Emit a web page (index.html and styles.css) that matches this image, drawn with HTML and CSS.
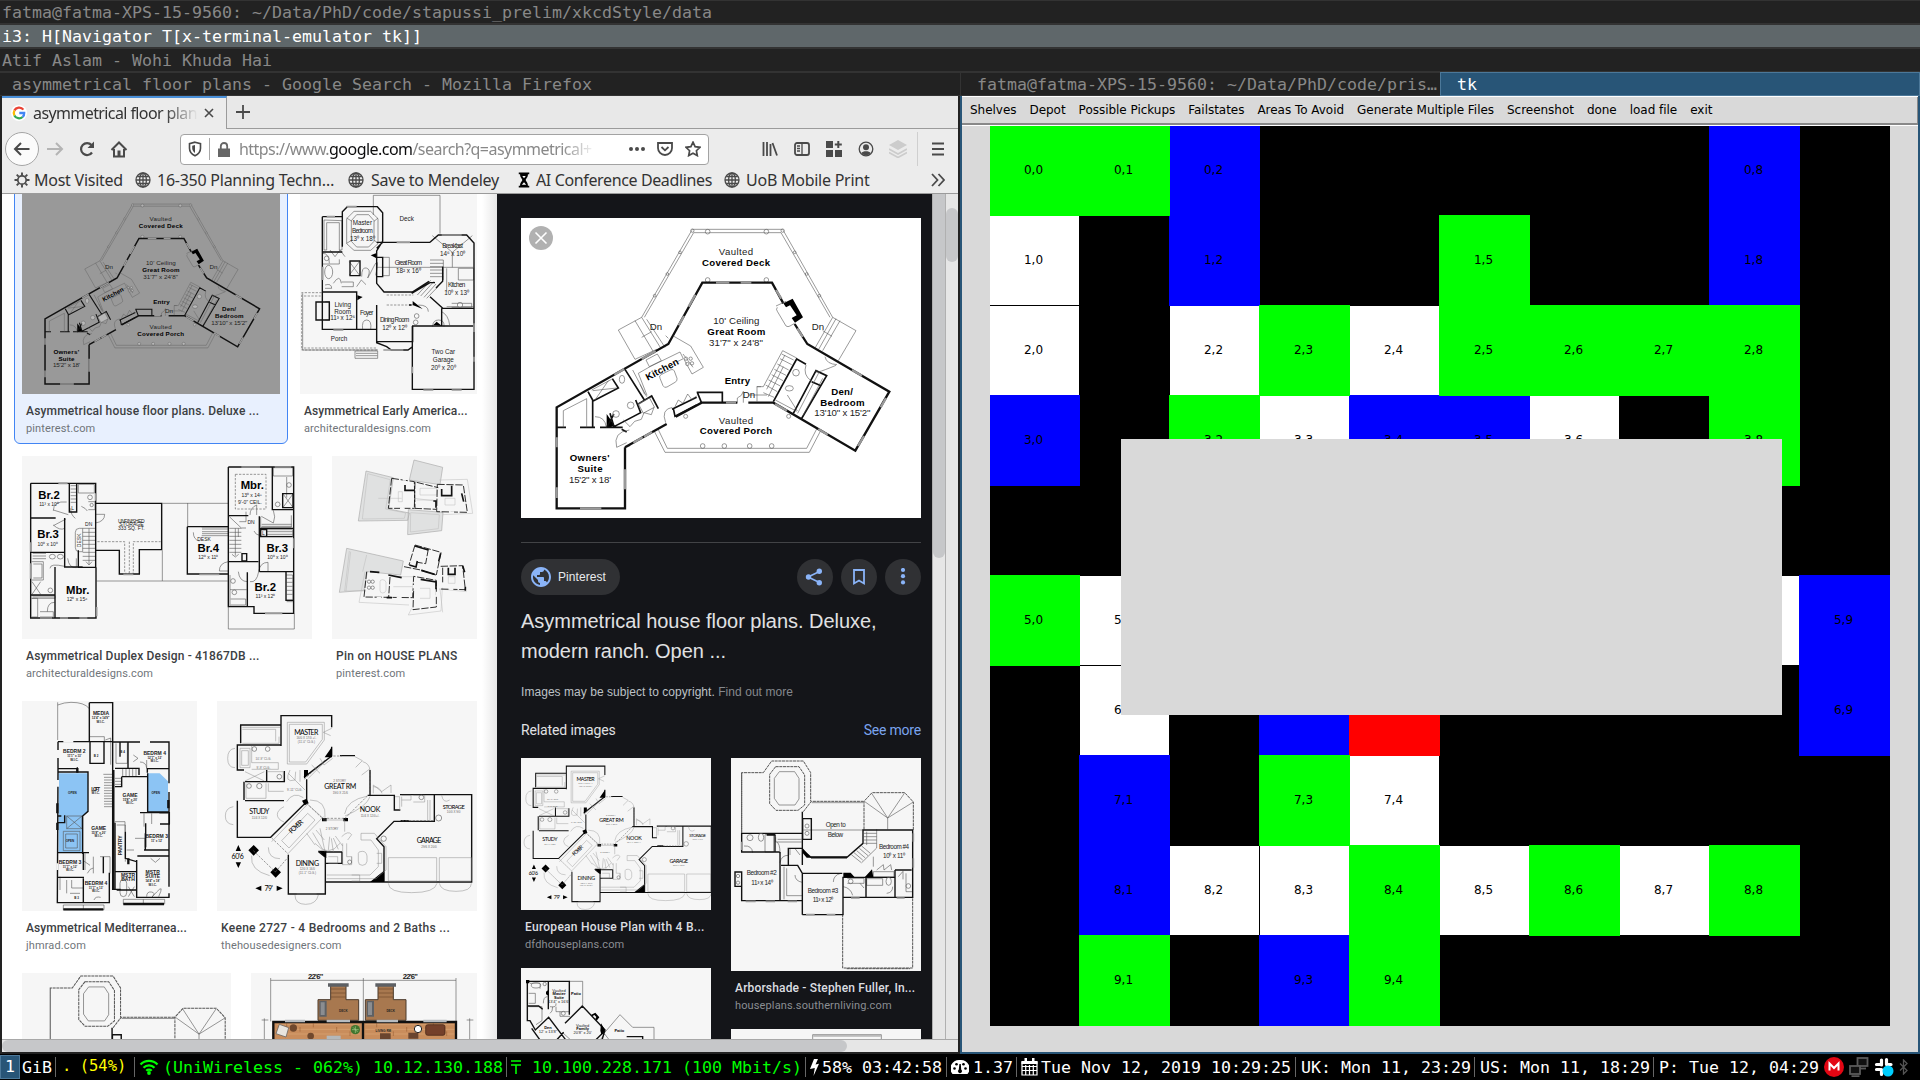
FILE: index.html
```html
<!DOCTYPE html>
<html lang="en">
<head>
<meta charset="utf-8">
<title>Desktop</title>
<link rel="stylesheet" href="styles.css">
</head>
<body>
<svg class="defs" width="0" height="0">
  <defs>
    <g id="globe"><circle cx="8" cy="8" r="7"/><ellipse cx="8" cy="8" rx="3.4" ry="7"/><path d="M1 8h14M2.3 4.5h11.4M2.3 11.5h11.4M8 1v14"/></g>

    <g id="deluxe">
      <path class="t" d="M425 352L577 88H848L998 352M433 352L581 98H843L990 352M425 352l-70 38 50 88 65-30M405 362l58 98M425 352l57 92M440 358l55 84M998 352l70 40-53 90M998 352l-53 92M1020 362l-52 90M1008 356l-52 92M455 395l-30 17M968 392l28 17"/>
      <path class="t" d="M462 692l33 65H928l34-65M474 687l28 58H920l30-58"/>
      <g class="c"><circle cx="577" cy="92" r="5"/><circle cx="848" cy="92" r="5"/><circle cx="623" cy="95" r="7"/><circle cx="799" cy="95" r="7"/><circle cx="502" cy="222" r="4"/><circle cx="540" cy="157" r="4"/><circle cx="464" cy="287" r="4"/><circle cx="920" cy="222" r="4"/><circle cx="884" cy="157" r="4"/><circle cx="958" cy="287" r="4"/><circle cx="623" cy="240" r="7"/><circle cx="799" cy="240" r="7"/><circle cx="608" cy="738" r="7"/><circle cx="673" cy="738" r="7"/><circle cx="749" cy="738" r="7"/><circle cx="815" cy="738" r="7"/><circle cx="557" cy="649" r="6"/><circle cx="866" cy="649" r="6"/></g>
      <path class="w" d="M375 742v183H170V622L505 432 607 248H816L850 310M884 372l38 60L1168 575 1066 752 820 608H745M712 608H605L527 650M500 672L375 742M375 742l15-8"/>
      <path class="win" d="M170 712v30M170 862v32M240 925h64M375 808v60M648 248h40M722 248h32M536 376l16-28M566 320l20-36M828 270l16 26M892 385l16 26M343 524l30-17M425 477l42-24M1056 510l30 17M1142 622l16-28M1074 738l18-30M955 687l28 17M825 612l36 20M400 728l28-16M432 710l24-14M678 608h30"/>
      <path class="k" d="M850 310l28-14 31 56-24 16-10-14 15-8-20-30-12 6zM320 642l25 36-25 6z"/>
      <path class="m" d="M278 682V600l-14-25M170 682h28M240 682h45M300 682h68M375 508l60 95M278 604l77-40-18-28M330 640l12 40 80-42-15-38M415 612l40-24 20 38M520 625l5 24 65-34M516 628l74-36M590 577h77v30M592 577l12 30M820 605l70-128 28 16M880 640l68-128 32 15-76 130M935 545l28 12M320 682l22-40M365 688l15 8"/>
      <path class="t" d="M190 682v-50l70-36v86M275 570l60-32M285 600l40-58M278 572l72-8M520 408l52 30 38 64-34 20-24-44M505 415l-8-8M438 480l34-18 12 20-36 18zM415 520l35-20 90-44 10 20-20 10M415 520l26 66M398 510l42 80M549 462l30 40M480 535q-5-8 5-12l28-14q8-2 10 4l8 22q2 8-6 12l-24 14q-8 4-12-4zM828 318l30-14M832 322q-5 6 0 12l26 44q6 4 12 0l14-8M285 650q30 0 34 32M350 742q-12-46 38-52M350 742l30-14M497 668q-15-40 20-46M525 620l10-20 14 10 14-28 12 16 15-10M370 660l20 20 14-16 20-6 8-20 22 6 8-22M975 470q4 22 36 24M952 510q-20 18 56-14M918 495q-10 30 16 48M712 608v-14q15-6 18-20v34M420 553l14 30"/>
      <path class="t" d="M790 560l58-108 42 22M800 568l55-103M783 560h-12v45M770 560h20M790 578l32 14M797 555l35 20M806 540l35 18M815 524l34 18M823 508l35 18M832 492l34 18M840 476l35 18M845 462l36 18M805 590l45-90M745 585h56M826 600l64 34M862 585l30 48M893 640l65-125M910 645l58-110"/>
      <g class="c"><circle cx="348" cy="642" r="10"/><circle cx="392" cy="616" r="10"/><circle cx="888" cy="518" r="10"/><ellipse cx="366" cy="538" rx="8" ry="12"/><ellipse cx="868" cy="565" rx="12" ry="8"/><circle cx="558" cy="476" r="5"/><circle cx="572" cy="476" r="5"/><circle cx="562" cy="492" r="5"/><circle cx="576" cy="490" r="5"/><rect x="420" y="600" width="38" height="32" transform="rotate(-28 440 616)"/></g>
      <g class="lbl"><text x="708" y="166" textLength="103">Vaulted</text><text class="b" x="708" y="198" textLength="204">Covered Deck</text><text x="709" y="373" textLength="138">10' Ceiling</text><text class="b" x="709" y="405" textLength="174">Great Room</text><text x="708" y="437" textLength="162">31'7" x 24'8"</text><text x="468" y="391">Dn</text><text x="954" y="391">Dn</text><text x="747" y="594">Dn</text><text class="b" x="712" y="552" textLength="76">Entry</text><text class="b" x="486" y="518" textLength="108" transform="rotate(-28 486 508)">Kitchen</text><text x="708" y="671" textLength="103">Vaulted</text><text class="b" x="708" y="703" textLength="217">Covered Porch</text><text class="b" x="1026" y="585" textLength="65">Den/</text><text class="b" x="1027" y="617" textLength="133">Bedroom</text><text x="1027" y="649" textLength="168">13'10" x 15'2"</text><text class="b" x="269" y="784" textLength="120">Owners'</text><text class="b" x="270" y="816" textLength="75">Suite</text><text x="270" y="848" textLength="126">15'2" x 18'</text></g>
    </g>

    <g id="keene">
      <path class="w5" d="M843 168V77H995V112M995 170v28L912 262M722 160v-55H843M722 165h-10v75h20M735 275h118v-32M800 240v35M712 332V442H812L920 335V268M735 332h117M712 165h130M732 275v55M1020 197h45M1110 240v75M1103 316H1183V360M1200 314H1415V576H976M1303 314v80H1182L1130 446 1152 470V576M865 494V612H976V486M976 486h50M1183 314v46h18M1202 392h24M955 484l22 18M976 485v35h50v-35"/>
      <path class="k" d="M996 170v32h-22zM1152 542v34h-42zM912 240h12v12l-12 14zM745 481l16-16 16 16-16 16zM811 547l16-16 16 16-16 16zM955 482h24v22zM707 483h16l-8-18zM707 517h16l-8 17zM784 587v16l-18-8zM830 587v16l18-8zM906 332l14-6 6 14-12 6zM966 384h14v10h-14zM1030 384h14v10h-14z"/>
      <path class="t5" d="M862 97H973V150L920 222H862zM868 103H967V148L917 216H868zM727 112h113M727 118h100v36M727 160h110v-20M720 175h30v58h-30zM725 182h20v44h-20zM755 168v50h80v20h-80M995 115l-25 12 22 10M975 215l-50 50M935 225l25 25M960 205l12 20 26-20M870 240q-20 40 15 30l2-25M900 240v35M705 175q-22 2-22 30t22 28M700 350q-24 4-24 28t24 26M735 245l58 28M735 273l58-28M800 245h50v28M738 280v45h60v-45M805 280v24h46M852 350q-20 10-20 24t20 22M860 335q20-32 50-12M1065 200l22 12-20 20M1088 215q20 5 22 26M1085 255l24-18M1120 310v-25l25 20 28-20v24M1120 290q20 0 26 20M1185 320h14v40M1205 320v30M1205 316h28v14h-28M1240 316h34v20h-34M1283 330v60M1290 330v60M1325 316q5 26 24 14M1103 318Q1040 330 1034 372M1110 320Q1100 350 1035 378M930 330q50 0 45 52M815 455l110-115M925 345l45 40M865 490l105-110M845 452l78-82 22 20-78 84zM1165 503h145v70h-145zM1318 503h96v70h-96zM1165 580q0 28 70 28t76-28M1318 580q4 24 50 24t46-24M885 615q0 28 32 28t38-28M755 497q-6 44 54 60M805 472q0 34 35 34M920 430l25 35M945 460q40 45 75 0M938 428l30 50M948 420l25 30M960 415l15 70M985 480l4-40M1000 485l-6-40M1015 478l-15-34M1028 468l-22-30M1025 440q20-20 30-6l-12 16M1028 460v65M1040 460v40h15v24h-28M980 555h130l25-25v-50l-22-30h-30v-20h40l35 40v70l-30 26H980M1055 500v20M1075 490q0-6 12-6t14 14v16q-2 12-14 12t-12-12zM1130 490h15v30h-15M1055 555h24v18h-24M985 500h28v20h-28M970 390h64v35M890 612h60M915 300l-50-50"/>
      <path class="d5" d="M975 210l-62 58M1000 198h25M1110 240v75M1102 318L1035 385M970 385h68M920 340l50 48M815 444l50 48M760 482l66 64M826 546l38-44M1205 392h95"/>
      <g class="c5"><circle cx="763" cy="177" r="7"/><circle cx="803" cy="177" r="7"/><circle cx="838" cy="260" r="7"/><circle cx="747" cy="288" r="7"/><circle cx="778" cy="288" r="8"/><circle cx="1316" cy="384" r="9"/><circle cx="1264" cy="322" r="7"/><circle cx="1151" cy="446" r="8"/><circle cx="1049" cy="516" r="6"/></g>
      <g class="kl"><text x="919" y="134" textLength="72">MASTER</text><text x="1021" y="297" textLength="96">GREAT RM</text><text x="778" y="372" textLength="60">STUDY</text><text x="1110" y="367" textLength="62">NOOK</text><text x="1361" y="356" font-size="17" textLength="66">STORAGE</text><text x="1287" y="458" textLength="74">GARAGE</text><text x="922" y="527" textLength="70">DINING</text><text x="888" y="417" textLength="50" transform="rotate(-43 888 410)">FOYER</text><text x="713" y="507" textLength="37">60'6</text><text x="806" y="602" textLength="25">79'</text></g>
      <g class="ks"><text x="919" y="147">16/0 X 17/0 +/-</text><text x="919" y="158">(11'-0" CLG.)</text><text x="1019" y="275">2 STORY</text><text x="1021" y="311">19/0 X 21/6</text><text x="778" y="387">11/4 X 12/0</text><text x="1110" y="382">11/4 X 12/0+/-</text><text x="1361" y="370">10/0 X 9/0</text><text x="1287" y="473">29/6 X 20/0</text><text x="922" y="541">12/0 X 16/0</text><text x="922" y="552">(11'-1" CLG.)</text><text x="790" y="209">10'-9" CLG.</text><text x="790" y="237">9'-9" CLG.</text><text x="884" y="303">9'-11" CLG.</text><text x="996" y="419">2 STORY</text></g>
    </g>

    <g id="arbor">
      <path class="dw" d="M725 278V98h65l25-35h95l22 35v86M910 215l24-31h158M1092 268V184l24-26h98l26 28v84M1028 522V684h210V472M1040 686h190M725 98v180M827 80h70l17 25v90l-20 16h-66l-19-20v-88z"/>
      <path class="t" d="M838 95h46l13 20v62l-12 18h-48l-14-20v-60zM1163 234V268M1163 234l-70-50M1163 234l-48-74M1163 234l50-74M1163 234l77-48M935 188h155M910 270h180M852 380v98M860 385v82h48M827 292v14h78M833 298h72M795 284h26v52h-26zM840 340q0-30-10-34M732 318q24-2 26 20M840 368q4-22 24-22M870 345v-20M900 345l-14-18M885 405q0 18 22 22M1000 426q0-20 22-26M1120 350v30M1130 390l20-16 2 16 20-16 3 16M1030 440q22 4 28 26M1080 430l12 14M1160 460q18-2 18-20M1195 410l14-16v24M1100 416h48v20h-48zM1218 400v55h18M1120 395h62v16h-62zM1042 415h50v15h-50"/>
      <path class="t" d="M1100 275v40M1092 290h38M1092 300h38M1092 310h38M1092 280h38M1085 318l26 22M1078 325l26 22M1070 332l26 22M1062 338l26 22M1054 344l30 24M1085 368l45-44v-56"/>
      <path class="w5" d="M725 284V280H907M907 215v115l26 22h108l48-42V270H1238V472H1030M725 280v56h54M725 396v86H907V400M727 336h112M840 336v144M825 284v52M907 524h122V410M907 482v42M843 376h50l14 24h120M907 350v-25M865 375v-50h42v50M1030 412h155v60M1098 412v60M1185 390v22M1185 390h50M705 396h20v43h-20zM908 236h26v62h-26z"/>
      <path class="w8" d="M933 352h108M800 284h26"/>
      <path class="k" d="M1030 398h22l12 14h-34zM1094 412l22-24 4 24zM908 325l26 28h-14l-12-14z"/>
      <path class="win5" d="M737 484h30M797 484h28M863 484h28M918 524h26M980 524h26M1053 474h26M1190 474h24M725 305v25M1240 280v25M1240 355v28"/>
      <g class="c5"><circle cx="750" cy="293" r="9"/><ellipse cx="783" cy="292" rx="8" ry="12"/><circle cx="1052" cy="424" r="7"/><ellipse cx="1166" cy="424" rx="8" ry="12"/><circle cx="1225" cy="438" r="7"/><circle cx="921" cy="258" r="6"/><circle cx="921" cy="280" r="6"/><circle cx="714" cy="408" r="5"/><circle cx="714" cy="428" r="5"/></g>
      <g class="al"><text x="1007" y="262" textLength="60">Open to</text><text x="1006" y="290" textLength="46">Below</text><text x="785" y="406" textLength="90">Bedroom #2</text><text x="786" y="434" textLength="64">11³ x 14⁰</text><text x="969" y="458" textLength="92">Bedroom #3</text><text x="969" y="486" textLength="62">11³ x 12⁰</text><text x="1182" y="326" textLength="90">Bedroom #4</text><text x="1182" y="354" textLength="66">10⁰ x 11⁰</text></g>
    </g>
  </defs>
</svg>

<header class="titles">
  <div class="title">fatma@fatma-XPS-15-9560: ~/Data/PhD/code/stapussi_prelim/xkcdStyle/data</div>
  <div class="title title-focus">i3: H[Navigator T[x-terminal-emulator tk]]</div>
  <div class="title">Atif Aslam - Wohi Khuda Hai</div>
</header>

<main class="desk">
  <section class="pane">
    <div class="title title-indent">asymmetrical floor plans - Google Search - Mozilla Firefox</div>
    <div class="firefox">
      <div class="tabs">
        <div class="tab">
          <svg class="favicon" width="16" height="16" viewBox="0 0 16 16"><circle cx="8" cy="8" r="8" fill="#fff"/><path d="M12.4 4.6A5.3 5.3 0 0 0 3.4 5.6" stroke="#ea4335"/><path d="M3.4 5.6A5.3 5.3 0 0 0 3.4 10.4" stroke="#fbbc05"/><path d="M3.4 10.4A5.3 5.3 0 0 0 11.6 12" stroke="#34a853"/><path d="M11.6 12A5.3 5.3 0 0 0 13.2 8H8.3" stroke="#4285f4"/></svg>
          <span class="tab-text">asymmetrical floor plan</span>
          <svg class="ic" width="12" height="12" viewBox="0 0 12 12"><path d="M2 2l8 8M10 2l-8 8" stroke-width="1.6"/></svg>
        </div>
        <svg class="ic plus" width="16" height="16" viewBox="0 0 16 16"><path d="M8 1v14M1 8h14" stroke-width="1.8"/></svg>
      </div>
      <div class="nav">
        <div class="back"><svg class="ic" width="18" height="16" viewBox="0 0 18 16"><path d="M16.500 8H2M8 2L2 8l6 6" stroke-width="2"/></svg></div>
        <svg class="ic off" width="18" height="16" viewBox="0 0 18 16"><path d="M1 8h15M10 2l6 6-6 6" stroke-width="2"/></svg>
        <svg class="ic" width="18" height="16" viewBox="0 0 18 16"><path d="M14 11.500A6 6 0 1 1 13.500 4" stroke-width="2.200"/><path class="f" d="M16 0.500v6.500H9.500z"/></svg>
        <svg class="ic" width="18" height="17" viewBox="0 0 18 17"><path d="M1.500 9L9 1.500 16.500 9M4 8v7.500h10V8" stroke-width="2"/><path class="f" d="M7.500 9.500h3v6h-3z"/></svg>
        <div class="urlbar">
          <svg class="ic" width="14" height="16" viewBox="0 0 14 16"><path d="M7 1.200l5.500 1.500v4.500c0 3.500-2.300 6-5.500 7.600C3.800 13.200 1.500 10.700 1.500 7.200V2.700z" stroke-width="1.600"/><path class="f" d="M7 4v8c-1.800-1.200-2.800-2.800-2.800-5V4.700z"/></svg>
          <i class="urlsep"></i>
          <svg class="ic" width="12" height="15" viewBox="0 0 12 15"><path class="g6" d="M0 6.500h12V15H0z"/><path d="M2.800 7V4.200a3.200 3.200 0 0 1 6.400 0V7" stroke="#666" stroke-width="1.800"/></svg>
          <span class="url">https://www.<b>google.com</b>/search?q=asymmetrical+</span>
          <svg class="ic dots" width="16" height="16" viewBox="0 0 16 16"><g class="f"><circle cx="2" cy="8" r="2"/><circle cx="8" cy="8" r="2"/><circle cx="14" cy="8" r="2"/></g></svg>
          <svg class="ic" width="16" height="16" viewBox="0 0 16 16"><path d="M1 2h14v5a7 7 0 0 1-14 0zM4.500 6L8 9.300 11.500 6" stroke-width="1.800"/></svg>
          <svg class="ic" width="16" height="16" viewBox="0 0 16 16"><path d="M8 1.200l2.100 4.500 4.900.6-3.600 3.400.9 4.900L8 12.200l-4.300 2.400.9-4.900L1 6.300l4.900-.6z" stroke-width="1.700"/></svg>
        </div>
        <div class="tools">
          <svg class="ic" width="16" height="16" viewBox="0 0 16 16"><path d="M1.500 1v14M5 1v14M8.500 3v12M10.500 2l4.500 12.500" stroke-width="1.800"/></svg>
          <svg class="ic" width="16" height="16" viewBox="0 0 16 16"><rect x="1" y="2" width="14" height="12" rx="2" stroke-width="1.800"/><path d="M8 2v12M3 5h3M3 7.500h3M3 10h3" stroke-width="1.300"/></svg>
          <svg class="ic" width="16" height="16" viewBox="0 0 16 16"><path class="f" d="M0 0h7v7H0zM0 9h7v7H0zM9 9h7v7H9z"/><path d="M12.300 0v7M8.800 3.500h7" stroke-width="2"/></svg>
          <svg class="ic" width="16" height="16" viewBox="0 0 16 16"><circle cx="8" cy="8" r="6.800" stroke-width="1.300"/><circle class="f" cx="8" cy="6.300" r="3"/><path class="f" d="M3.500 12c1-2.500 8-2.500 9 0-2 3-7 3-9 0z"/></svg>
          <svg class="ic layers" width="18" height="18" viewBox="0 0 18 18"><path class="l" d="M9 0l9 5-9 5-9-5z"/><path d="M0 9l9 5 9-5M0 12.500l9 5 9-5" stroke="#ccc" stroke-width="1.600"/></svg>
          <i class="navsep"></i>
          <svg class="ic" width="12" height="14" viewBox="0 0 12 14"><path d="M0 1.500h12M0 7h12M0 12.500h12" stroke-width="2"/></svg>
        </div>
      </div>
      <div class="marks">
        <span style="width:121px"><svg class="ic" width="16" height="16" viewBox="0 0 16 16"><circle cx="8" cy="8" r="4.200" stroke-width="1.700"/><path d="M8 0.500v3M8 12.500v3M.5 8h3M12.500 8h3M2.700 2.700l2 2M11.300 11.300l2 2M13.300 2.700l-2 2M4.700 11.300l-2 2" stroke-width="1.900"/></svg>Most Visited</span>
        <span style="width:213px"><svg class="ic gl" width="16" height="16" viewBox="0 0 16 16"><use href="#globe"/></svg>16-350 Planning Techn…</span>
        <span style="width:169px"><svg class="ic gl wide" width="16" height="16" viewBox="0 0 16 16"><use href="#globe"/></svg>Save to Mendeley</span>
        <span style="width:207px"><svg class="glass" width="14" height="16" viewBox="0 0 16 17"><path d="M2 0h12v2h-1.500c0 4-2.500 4.800-2.500 6.500s2.500 2.500 2.500 6.500H14v2H2v-2h1.500c0-4 2.500-4.800 2.500-6.500S3.500 6 3.500 2H2z"/><path d="M6 4h4L8 6.500zM5.500 14L8 11l2.500 3z" fill="#fff"/></svg>AI Conference Deadlines</span>
        <span><svg class="ic gl" width="16" height="16" viewBox="0 0 16 16"><use href="#globe"/></svg>UoB Mobile Print</span>
        <svg class="ic more" width="14" height="14" viewBox="0 0 14 14"><path d="M1 1l5.500 6L1 13M7.500 1L13 7l-5.500 6" stroke-width="1.800"/></svg>
      </div>

      <div class="view">
        <div class="results">
          <div class="row">
            <figure class="card selected">
              <svg class="shot" width="258" height="201" viewBox="63 36.500 1200 935"><use href="#deluxe"/></svg>
              <figcaption><b>Asymmetrical house floor plans. Deluxe ...</b><span>pinterest.com</span></figcaption>
            </figure>
            <figure class="card">
              <svg class="shot" width="177" height="201" viewBox="900 9 531 603">
                <path class="t" d="M1120 75V16h200v115M972 90v90h8V98h38v82h8V92zM1062 64h50l22 22v75l-22 20h-50l-22-20V86zM1070 74h36l16 18v62l-16 17h-36l-16-17V92zM1040 84l16 10M1134 84l-12 10M1134 160l-12-10M1040 160l16-10M1130 232h290M1297 137l60 50 60-50M1357 187v45M1290 210h40v60M1290 220h40M1290 230h40M1290 240h40M1290 250h40M1290 260h40M1252 315l40-44M1262 318l40-44M1272 322l36-40M1280 325l34-35M1375 235h46v35h-46zM1340 235v70M1340 350h80M968 190q20 0 20 30M990 180l15 20 15-20 15 20M1085 260q0-30 14-26t6 24 14-24 8 22M968 222h50v-14M1070 290l14-20 14 14M975 285q20-6 20 10h-20M1000 280q20-30 24 0M1025 290h35v-14h-35M1088 420q-4-30 12-30t12 30M1255 345q30 0 30 20M1298 410q0-20 18-20t16 20M1325 365q20 10 24 40M1048 215l30 40M1078 215l-30 40M1148 202h20v55h-20M976 335h12v55h-12M1355 340h60v12h-60M1065 483h68v22h-68zM1068 490h64M1068 497h64M908 310v170h226"/>
                <path class="d5" d="M965 308h-60v172h228M912 318h50M912 474h218M1160 315h80M1160 345h80"/>
                <path class="w5" d="M967 80h60V65l15-15h90l16 18v85l-18 30v97l22 26h85l50-32M1130 157H1290M1148 157l-18 18M1027 80v90M967 80v338h102M1027 186h-58M1050 213h30v44h-30zM968 306h102v112h60M1130 345v110h108V408H1422V598H1237V408M1235 345h-8M1130 418v40l30 12 14 10h50l14-10M1290 157l25-22h85l22 24v250M1325 355h98M1325 355v55M1235 310l55-32h15M1328 230v44l-20 20M1290 320l40 36M1130 202h18v58h-18M948 336h40v54h-40z"/>
                <path class="k" d="M1072 316l16 5-16 10zM1112 196l16-6v14zM1238 333l30 24-30-12zM1300 405l10-10 15 12z"/>
                <path class="win5" d="M1040 50h30M1190 157h40M1325 135h60M980 80h25M968 230v40M1422 400v26M1270 600h30M1355 600h30M1237 530v20M1000 420h30M1150 480h60M1422 500v15"/>
                <g class="c5"><ellipse cx="986" cy="246" rx="12" ry="20"/><circle cx="980" cy="205" r="7"/><circle cx="1250" cy="378" r="7"/><circle cx="1247" cy="397" r="7"/><circle cx="1380" cy="345" r="8"/></g>
                <g class="al"><text x="1220" y="94">Deck</text><text x="1087" y="104">Master</text><text x="1087" y="128" textLength="62">Bedroom</text><text x="1087" y="153">13⁰ x 18⁰</text><text x="1225" y="225" textLength="82">Great Room</text><text x="1225" y="250">18² x 16⁰</text><text x="1358" y="174" textLength="62">Breakfast</text><text x="1358" y="198">14⁶ x 10⁰</text><text x="1370" y="291" textLength="52">Kitchen</text><text x="1370" y="316">10⁰ x 13⁰</text><text x="1028" y="352">Living</text><text x="1028" y="371">Room</text><text x="1028" y="389">11³ x 12⁶</text><text x="1100" y="376" textLength="40">Foyer</text><text x="1184" y="396" textLength="88">Dining Room</text><text x="1184" y="420">12⁰ x 12⁰</text><text x="1017" y="452">Porch</text><text x="1330" y="491">Two Car</text><text x="1330" y="516">Garage</text><text x="1330" y="541">20⁰ x 20⁰</text></g>
              </svg>
              <figcaption><b class="tight">Asymmetrical Early America...</b><span>architecturaldesigns.com</span></figcaption>
            </figure>
          </div>
          <div class="row">
            <figure class="card">
              <svg class="shot" width="290" height="183" viewBox="66 33 870 549">
                <path class="t" d="M487 175H685M487 316v92M290 408H683M563 244v-70M685 486v66h198V506M95 350h35v55H95M100 357h26v42h-26M235 118h48v26h-48zM265 170h20v24h-20M160 195l45 14M160 197q0-30 40-26M160 242l38-20M160 240q20 18 34 10M203 340q4 30 26 28v-28M286 208h28q0 22-28 26M212 190q0 20 14 30M150 370q0-16 44-6M238 250h10v70h-10q-12 0-12-12v-46q0-12 12-12M95 452h70v8H95M95 460h18v56H95M142 500q0-28 22-28M120 500h40v16h-40M244 184q14 6 18 14M605 246h80v26h-80M580 262q0 22 18 26M820 68h58v25h-58zM860 96v62M820 196q8 20 0 38l-36-20M750 210q0-22 20-30v30M658 378q0-24 27-28M685 378h-27M776 380q4-28 28-28v28M743 410q-25 0-28-30M750 410q20 4 26-30M690 390v44h50M690 434v50h50M692 462h45v18h-45M782 215v32h92v-36M800 254h78v20h-78M858 390h20v75h-20M860 470h20v36M762 258q4 12 20 14M715 250v26M738 200v30h-20"/>
                <path class="t" d="M248 250h38M248 262h38M248 274h38M248 286h38M248 298h38M248 310h38M248 322h38M248 334h38M248 346h38M267 250v108M258 350l9 10 9-10M688 250h36M688 262h36M688 274h36M688 286h36M688 298h36M688 310h36M688 322h36M706 250v82M696 328l10 8 10-8M688 215l36 34h14M98 325h40M98 333h40M98 341h40M98 456h64M212 122h18M212 132h18M212 142h18M212 152h18M212 162h18M212 172h18M606 252h78M606 260h78M606 266h78M785 238h90M785 244h90M800 260h78M800 268h78M860 400h18M860 412h18M860 424h18M860 436h18M860 448h18M850 148l28 38M878 148l-28 38M96 410l26 38M122 410l-26 38"/>
                <path class="d5" d="M292 290h82v95h26v-95h82M706 88h92v104h-92zM388 290v96"/>
                <path class="w5" d="M92 115H287V367h-52V316M92 115V519H288V367M92 219h75M194 219v147h54M92 322h102M165 366v153M208 115v86h22v-86M92 450h72M287 175H485V314H418v73H358V316H287M562 245h123M562 245V387H685M685 66H881V505H762V485H685V66M817 66v128h62M685 212h60M778 214v166M778 380h103M742 382v105M685 350h90M778 250h103M778 275h100M848 146h31v42h-31zM726 326h14v22h-14zM782 254h18v20h-18zM858 382v84h22M208 180v20"/>
                <path class="win5" d="M175 115h28M92 292v28M92 355v46M287 145v22M120 519h36M180 519h24M238 519h24M290 486v28M370 388h30M598 388h60M724 66h56M824 66h50M882 280v30M795 505h52"/>
                <g class="c5"><ellipse cx="157" cy="335" rx="9" ry="7"/><ellipse cx="181" cy="335" rx="9" ry="7"/><circle cx="270" cy="157" r="7"/><circle cx="275" cy="180" r="5"/><circle cx="867" cy="120" r="7"/><circle cx="833" cy="178" r="7"/><circle cx="699" cy="408" r="7"/><circle cx="703" cy="442" r="7"/><circle cx="151" cy="436" r="7"/></g>
                <g class="dl"><text x="147" y="162">Br.2</text><text x="144" y="278">Br.3</text><text x="233" y="447">Mbr.</text><text x="757" y="131">Mbr.</text><text x="625" y="322">Br.4</text><text x="832" y="322">Br.3</text><text x="796" y="437">Br.2</text></g>
                <g class="ds"><text x="147" y="184">11³ x 10⁰</text><text x="143" y="302">10⁰ x 10⁰</text><text x="231" y="469">12⁰ x 15⁶</text><text x="755" y="155">13⁰ x 14⁸</text><text x="750" y="178">9'-0" CEIL.</text><text x="625" y="343">12⁰ x 11⁰</text><text x="832" y="343">10⁰ x 10⁰</text><text x="796" y="458">11³ x 12⁰</text><text x="394" y="233" textLength="80">UNFINISHED</text><text x="394" y="244">STORAGE</text><text x="394" y="255">333 SQ. FT.</text><text x="266" y="244">DN</text><text x="753" y="236">DN</text><text x="612" y="288">DESK</text><text x="790" y="269">L</text><text x="218" y="194">L</text><text x="238" y="290" transform="rotate(-90 238 286)">DESK</text></g>
              </svg>
              <figcaption><b>Asymmetrical Duplex Design - 41867DB ...</b><span>architecturaldesigns.com</span></figcaption>
            </figure>
            <figure class="card">
              <svg class="shot pin" width="145" height="183" viewBox="996 33 435 549">
                <path class="pf" d="M1098 78l82 20-14 94 62 12-5 22-148 2zM1242 45l86 22-8 52-92-14zM1225 194l104 8-4 55-102 12zM1040 310l170 38-8 42-100-10-10 56-74 6z"/>
                <path class="pt" d="M1103 86l68 18-14 88 60 12-4 16-126 2zM1232 203l86 6-3 42-84 10zM1318 105l84-2 16 102-90 4M1052 320l-14 118M1100 330l-12 50M1048 318l-14 120h64M1095 380l-18 92 150 8M1235 490l-10 20 98-12 4-70M1400 440l-80-8 8 70M1135 160h70M1260 130h50v20h-50zM1335 160h30v20h-30zM1180 395h60v30h-60M1260 430h30v30h-30M1345 395h20v20h-20zM1140 410q0-6 8-6t10 8v24q-2 8-10 8t-8-8zM1195 140h12v30h-12zM1250 165h50M1245 160l60 8"/>
                <path class="w5" d="M1175 100l68 10 2 80M1175 100l-10 90h78M1250 112l65 16M1245 110l-2 80 66 3M1312 118l78 2 12 82-92-2zM1245 300l78 22-14 68M1245 300l-18 60M1212 365l60 12M1264 376l44 14M1322 364l66-2 8 72-78-2M1100 380l-8 76 146 2 3-64 68 12v80l-70 8 2-60M1170 396l-4 60M1285 312l-8 44-24-4M1328 368v44"/>
                <path class="pw" d="M1110 380l28 2M1165 390l40 8M1262 403l46 8v22M1228 360l20 6 4-18M1388 362l6 20M1396 425v12M1300 168h8v20M1215 120v16h28M1385 145l6 25M1245 303l40 12M1322 325l-6 24M1264 376l40 12M1160 458h16M1325 132v20h30v-30M1365 368v20h-20v-20"/>
                <path class="cut" d="M1200 190h14M1310 440v14M1240 420v10M1130 458h14M1190 458h14M1350 202h12M1350 432h10M1208 104h10"/>
                <g class="c5"><circle cx="1107" cy="410" r="5"/><circle cx="1118" cy="410" r="5"/><circle cx="1107" cy="428" r="5"/><circle cx="1118" cy="428" r="5"/></g>
              </svg>
              <figcaption><b class="loose">Pin on HOUSE PLANS</b><span>pinterest.com</span></figcaption>
            </figure>
          </div>
          <div class="row">
            <figure class="card">
              <svg class="shot" width="175" height="210" viewBox="66 33 525 630">
                <path class="blue" d="M176 250h88v114l-16 16v108h-72zM443 250h36l25 24v92h-61z"/>
                <path class="t" d="M173 150V37M173 45q20-8 40-8 40 0 54 18M190 424h50v58h-50zM197 432h35v42h-35zM200 378h46v38h-46zM200 378l46 38M246 378l-46 38M268 140h45v14M310 253h32M312 262h28M312 270h28M312 278h28M312 286h28M312 294h28M312 302h28M312 310h28M312 318h28M312 326h28M312 334h28M312 342h28M312 350h28M368 237v22M378 237v22M388 237v22M398 237v22M408 237v22M345 265h20M345 274h20M345 283h20M316 150l16-6v80M348 160v60h34v-60M400 195l14 10-14 10M440 210v26M420 216q18 0 20 18M345 395h30v30M350 405h26v110M380 480h22M405 445h30v28M432 370v40M455 370v32M478 370h28v34M360 580q0-12 10-12t10 12v28q0 12-10 12t-10-12zM385 590l18 30M403 590l-18 30M452 505l14 12 14-12M440 620q0-16 14-14t3 14 13-14 6 14M255 490v50M280 500v50M300 500h30v50M200 570v40M215 570v24h35M180 560v40M210 610h30M282 630q4-12 20-8M250 512l20 14M262 550q8-16 18-16M370 628h124v14H370zM190 645h122v14H190zM430 628v14M250 645v14"/>
                <path class="w5" d="M268 38h70V600M268 38v115M174 155H340M174 155V238l-2 400H328V548M174 246h90v118l-16 14V492M172 488h95M172 378h12M172 398h22v-22M340 156H507V622H410V510M340 598h22M345 235h72v20M345 290h20v-30M365 260h78M442 248v-12h64M443 250v116h62M420 368h88v34h-28M437 400v72M432 480H506M436 430v50M412 498h94M345 398v200M376 425v80l34 10v52M250 490v50M250 565v74M310 500v50M172 562h80M270 155v65h42v-22M384 156v80M360 156v44M232 232v14M174 236h60M312 155v44M345 545h64M350 600h60"/>
                <path class="w8" d="M340 240v360M190 658h120M370 642h122M172 340v30M172 398v22M505 330v25M232 234v14M385 505v18"/>
                <path class="cut" d="M174 180v24M174 270v20M507 280v26M507 590v20M172 520v20M190 155h30M420 156h30"/>
                <g class="ml"><text x="303" y="76">MEDIA</text><text x="223" y="190">BEDRM 2</text><text x="464" y="194">BEDRM 4</text><text x="287" y="302" textLength="26">LOFT</text><text x="390" y="321">GAME</text><text x="296" y="420">GAME</text><text x="470" y="444">BEDRM 3</text><text x="210" y="522">BEDRM 3</text><text x="288" y="584">BEDRM 4</text><text x="458" y="552">MSTR</text><text x="458" y="564">SUITE</text><text x="362" y="471" transform="rotate(-90 362 466)">PANTRY</text><text x="384" y="562">MSTR</text><text x="384" y="573">BATH</text></g>
                <g class="ms"><text x="302" y="87">12'4" x 14'9"</text><text x="302" y="98">W.I.C.</text><text x="223" y="202">11'1" x 13'</text><text x="223" y="213">W.I.C.</text><text x="464" y="206">12'1" x 12'</text><text x="464" y="217">W.I.C.</text><text x="217" y="312">OPEN</text><text x="467" y="311">OPEN</text><text x="210" y="455">OPEN</text><text x="287" y="311">W.I.C.</text><text x="390" y="332">15'8" x 20'</text><text x="390" y="343">W.I.C.</text><text x="296" y="431">15'8" x 20'</text><text x="296" y="442">W.I.C.</text><text x="470" y="456">11' x 12'</text><text x="210" y="533">11'1" x 12'</text><text x="210" y="544">W.I.C.</text><text x="288" y="596">11'1" x 13'</text><text x="288" y="607">W.I.C.</text><text x="458" y="577">14'4" x 18'</text><text x="458" y="588">W.I.C.</text><text x="288" y="200">B 2</text><text x="368" y="190">B 4</text><text x="230" y="628">B 3</text></g>
              </svg>
              <figcaption><b class="tight">Asymmetrical Mediterranea...</b><span>jhmrad.com</span></figcaption>
            </figure>
            <figure class="card">
              <svg class="shot" width="260" height="210" viewBox="651 33 780 630"><use href="#keene"/></svg>
              <figcaption><b class="loose">Keene 2727 - 4 Bedrooms and 2 Baths ...</b><span>thehousedesigners.com</span></figcaption>
            </figure>
          </div>
          <div class="row">
            <figure class="card">
              <svg class="shot" width="209" height="213" viewBox="642 54 615 627"><use href="#arbor"/></svg>
            </figure>
            <figure class="card">
              <svg class="shot" width="226" height="213" viewBox="753 849 678 639">
                <rect x="753" y="849" width="678" height="639" fill="#f6f6f6"/>
                <path class="t" d="M812 864v130M1090 864v130M1368 864v130M812 871h278M1090 871h278M793 985v100M1409 985v100M785 990h20M1400 990h20"/>
                <g class="pl"><text x="947" y="868" textLength="46">22'6"</text><text x="1231" y="868" textLength="46">22'6"</text></g>
                <path fill="#a8784f" stroke="#4a3a2c" stroke-width="3" d="M992 885h46v44h38v62H954v-62h38zM1134 885h46v44h38v62h-122v-62h38z"/>
                <path stroke="#70482a" stroke-width="2" d="M992 897h46M992 909h46M992 921h46M1134 897h46M1134 909h46M1134 921h46"/>
                <path fill="#5d6064" d="M984 880h62v10h-62zM1126 880h62v10h-62zM958 932h22v48h-22zM1100 932h22v48h-22z"/>
                <path fill="#8b8d90" d="M962 937h12v38h-12zM1104 937h12v38h-12z"/>
                <rect x="818" y="994" width="550" height="90" fill="#c98d5c"/>
                <path stroke="#d9a877" stroke-width="2" d="M830 1004h250M830 1018h250M830 1032h250M1096 1004h268M1096 1018h268M1096 1032h268"/>
                <path stroke="#93562d" stroke-width="1.500" d="M860 1000v12M900 1011v14M940 1000v12M1010 1011v14M1050 1024v14M1130 1000v12M1180 1024v14M1220 1011v14M1300 1000v12M1340 1024v14"/>
                <path stroke="#111" stroke-width="7" fill="none" d="M820 1090V996h548v94M1089 996v94"/>
                <path stroke="#b8bcc0" stroke-width="7" d="M855 993h60M980 993h70M1130 993h64M1270 993h70"/>
                <path fill="#e8e4de" stroke="#555" stroke-width="2" d="M838 1003l28 10-8 28-30-10z"/>
                <circle cx="880" cy="1014" r="11" fill="#70482d"/><circle cx="932" cy="1038" r="10" fill="#70482d"/><circle cx="1066" cy="1019" r="14" fill="#41752f"/><path stroke="#a8cf8a" stroke-width="2" d="M1056 1019h20M1066 1009v20M1059 1012l14 14"/>
                <circle cx="1254" cy="1017" r="11" fill="#fff" stroke="#222" stroke-width="3"/><rect x="1277" y="1004" width="58" height="32" rx="6" fill="#74402a" stroke="#3c1f12" stroke-width="2"/><path fill="#b4b8ba" d="M980 1037h42v14h-42z"/><path fill="#6a452f" d="M1140 1030h32v18h-32zM1225 1028h30v18h-30z"/>
                <g class="ms"><text x="1030" y="966">DECK</text><text x="1172" y="966">DECK</text><text x="1150" y="1027">LIVING RM</text></g>
              </svg>
            </figure>
          </div>
        </div>

        <aside class="detail">
          <div class="hero">
            <svg width="400" height="300" viewBox="63 54 1200 900"><use href="#deluxe"/></svg>
            <svg class="close" width="24" height="24" viewBox="0 0 24 24"><circle cx="12" cy="12" r="12" fill="#b1b1b1"/><path d="M6.500 6.500l11 11M17.500 6.500l-11 11" stroke="#fff" stroke-width="1.600"/></svg>
          </div>
          <hr>
          <div class="actions">
            <span class="chip"><svg width="24" height="24" viewBox="0 0 24 24"><path fill="#8ab4f8" d="M12 2C6.480 2 2 6.480 2 12s4.480 10 10 10 10-4.480 10-10S17.520 2 12 2zm-1 17.930c-3.950-.49-7-3.850-7-7.930 0-.62.080-1.210.210-1.790L9 15v1c0 1.100.9 2 2 2v1.930zm6.900-2.540c-.26-.81-1-1.390-1.900-1.390h-1v-3c0-.55-.45-1-1-1H8v-2h2c.55 0 1-.45 1-1V7h2c1.100 0 2-.9 2-2v-.41c2.930 1.190 5 4.060 5 7.410 0 2.080-.8 3.970-2.100 5.390z"/></svg>Pinterest</span>
            <span class="btn"><svg class="share" width="18" height="18" viewBox="0 0 18 18"><path d="M14.500 3.500L3 9l11.500 5.500" fill="none" stroke="#8ab4f8" stroke-width="1.600"/><g fill="#8ab4f8"><circle cx="3.500" cy="9" r="2.700"/><circle cx="14.300" cy="3.300" r="2.700"/><circle cx="14.300" cy="14.700" r="2.700"/></g></svg></span>
            <span class="btn"><svg width="14" height="18" viewBox="0 0 14 18"><path d="M2 2h10v13.500l-5-3-5 3z" fill="none" stroke="#8ab4f8" stroke-width="1.800"/></svg></span>
            <span class="btn"><svg width="6" height="18" viewBox="0 0 6 18"><g fill="#8ab4f8"><circle cx="3" cy="2" r="2.100"/><circle cx="3" cy="8.200" r="2.100"/><circle cx="3" cy="14.400" r="2.100"/></g></svg></span>
          </div>
          <h1>Asymmetrical house floor plans. Deluxe, modern ranch. Open ...</h1>
          <p class="rights">Images may be subject to copyright. <span>Find out more</span></p>
          <div class="related-head"><span>Related images</span><a>See more</a></div>
          <div class="related">
            <div class="col">
              <figure class="card"><svg class="shot" width="190" height="152" viewBox="664 45 750 600"><use href="#keene"/></svg>
                <figcaption><b class="loose">European House Plan with 4 B...</b><span>dfdhouseplans.com</span></figcaption></figure>
              <figure class="card"><svg class="shot" width="190" height="150" viewBox="63 684 570 450">
                <path class="t" d="M208 724h40v72M312 880l48-56 38 38h64v60M88 800h38v42l-18 12M168 800v15h40M180 815v14h30M130 790q0-20 12-20M158 800q0 16-8 20M170 900l18-22 22 20M300 900l14-18 14 18M150 800q20 4 18-10M90 730h30v16M86 760h20v30h-20"/>
                <path class="w5" d="M80 724h128v85M82 724v118h8l16 28 40-38 50 66M145 724v84M82 798h34l12 10M195 850l52-52 68 72-12 40M208 798v26M247 798l-30 30M165 905l26-28M315 872l-30 30M380 890h48v20M120 900l-25-35"/>
                <path class="k" d="M78 720h10v10H78zM138 755l8-6v18l-8-4zM274 824l12-6 12 14-8 10-4-6 3-5-6-6-6 4zM303 850l12 20-10 16-4-14z"/>
                <g class="c5"><ellipse cx="108" cy="736" rx="14" ry="8"/><circle cx="134" cy="732" r="5"/><circle cx="190" cy="820" r="6"/></g>
                <g class="vl"><text x="177" y="755">Vaulted</text><text class="b" x="177" y="766">Master</text><text class="b" x="177" y="777">Suite</text><text x="177" y="789">13'4" x 16'6"</text><text class="b" x="228" y="766">Patio</text><text x="248" y="860">Vaulted</text><text class="b" x="248" y="871">Family</text><text x="248" y="882">20'8" x 20'</text><text class="b" x="144" y="868">Den</text><text x="144" y="880">12' x 13'8"</text><text class="b" x="358" y="876">Patio</text></g>
              </svg></figure>
            </div>
            <div class="col">
              <figure class="card"><svg class="shot" width="190" height="213" viewBox="693 54 570 639"><use href="#arbor"/></svg>
                <figcaption><b>Arborshade - Stephen Fuller, In...</b><span>houseplans.southernliving.com</span></figcaption></figure>
              <figure class="card"><svg class="shot" width="190" height="100" viewBox="693 867 570 300"><path class="t" d="M938 1000V884h206v116"/><path class="t" d="M940 888h202"/></svg></figure>
            </div>
          </div>
        </aside>
        <div class="vbar inner"><i></i></div>
        <div class="vbar outer"><i></i></div>
      </div>
      <div class="hbar"><i></i></div>
    </div>
  </section>

  <section class="pane">
    <div class="stack">
      <div class="title title-stack">fatma@fatma-XPS-15-9560: ~/Data/PhD/code/pris…</div>
      <div class="title title-active">tk</div>
    </div>
    <div class="tk">
      <nav class="menu"><span>Shelves</span><span>Depot</span><span>Possible Pickups</span><span>Failstates</span><span>Areas To Avoid</span><span>Generate Multiple Files</span><span>Screenshot</span><span>done</span><span>load file</span><span>exit</span></nav>
      <div class="canvas">
        <div class="cells">
          <i class="g">0,0</i><i class="g">0,1</i><i class="u">0,2</i><i></i><i></i><i></i><i></i><i></i><i class="u">0,8</i><i></i>
          <i class="h">1,0</i><i></i><i class="u">1,2</i><i></i><i></i><i class="g">1,5</i><i></i><i></i><i class="u">1,8</i><i></i>
          <i class="h">2,0</i><i></i><i class="h">2,2</i><i class="g">2,3</i><i class="h">2,4</i><i class="g">2,5</i><i class="g">2,6</i><i class="g">2,7</i><i class="g">2,8</i><i></i>
          <i class="u">3,0</i><i></i><i class="g">3,2</i><i class="h">3,3</i><i class="u">3,4</i><i class="u">3,5</i><i class="h">3,6</i><i></i><i class="g">3,8</i><i></i>
          <i></i><i></i><i></i><i></i><i></i><i></i><i></i><i></i><i></i><i></i>
          <i class="g">5,0</i><i class="h">5,1</i><i class="h"></i><i class="h"></i><i class="h"></i><i class="h"></i><i class="h"></i><i class="h"></i><i class="h"></i><i class="u">5,9</i>
          <i></i><i class="h">6,1</i><i></i><i class="u"></i><i class="r"></i><i></i><i></i><i></i><i></i><i class="u">6,9</i>
          <i></i><i class="u">7,1</i><i></i><i class="g">7,3</i><i class="h">7,4</i><i></i><i></i><i></i><i></i><i></i>
          <i></i><i class="u">8,1</i><i class="h">8,2</i><i class="h">8,3</i><i class="g">8,4</i><i class="h">8,5</i><i class="g">8,6</i><i class="h">8,7</i><i class="g">8,8</i><i></i>
          <i></i><i class="g">9,1</i><i></i><i class="u">9,3</i><i class="g">9,4</i><i></i><i></i><i></i><i></i><i></i>
        </div>
        <div class="popup"></div>
      </div>
    </div>
  </section>
</main>

<footer class="status">
  <span class="ws">1</span>
  <span class="blk clip"><em>GiB</em></span>
  <span class="blk yel">. <em>(54%)</em></span>
  <span class="blk grn"><svg width="20" height="16" viewBox="0 0 20 16"><path d="M1.500 5.500a12 12 0 0 1 17 0M4.500 8.700a7.800 7.800 0 0 1 11 0M7.300 11.700a3.800 3.800 0 0 1 5.400 0" fill="none" stroke="#0f0" stroke-width="2.300"/><circle cx="10" cy="14" r="1.900" fill="#0f0"/></svg><em>(UniWireless - 062%) 10.12.130.188</em></span>
  <span class="blk grn"><svg width="10" height="16" viewBox="0 0 10 16"><path d="M0 2h10M0 6h10M5 6v9" fill="none" stroke="#0f0" stroke-width="1.600"/></svg><em class="eth">10.100.228.171 (100 Mbit/s)</em></span>
  <span class="blk"><svg width="9" height="17" viewBox="0 0 9 17"><path d="M4 0h4L5.500 5.500 9 4.800 3.500 17l1.300-8L0 10z" fill="#fff"/></svg><em class="pw0">58% 03:42:58</em></span>
  <span class="blk"><svg width="18" height="16" viewBox="0 0 18 16"><path d="M9 1a9 8.500 0 0 1 7.500 14h-15A9 8.500 0 0 1 9 1z" fill="#fff"/><g fill="#000"><circle cx="3.500" cy="9.500" r="1.300"/><circle cx="5.500" cy="5.200" r="1.300"/><circle cx="14.500" cy="9.500" r="1.300"/><circle cx="12.500" cy="5.200" r="1.300"/><path d="M8.400 5l1.400 0 .4 5.500a2 2 0 1 1-2.400 0z"/></g></svg><em class="ld">1.37</em></span>
  <span class="blk"><svg width="17" height="18" viewBox="0 0 17 18"><path d="M1 4h15v13H1zM1 8.500h15M1 12.500h15M4.700 7v10M8.500 7v10M12.300 7v10" fill="none" stroke="#fff" stroke-width="1.200"/><path d="M.5 3h16v3H.5zM3.500 0h2.500v5H3.500zM11 0h2.500v5H11z" fill="#fff"/></svg><em class="dt">Tue Nov 12, 2019 10:29:25</em></span>
  <span class="blk zone">UK: Mon 11, 23:29</span>
  <span class="blk zone">US: Mon 11, 18:29</span>
  <span class="blk zone">P: Tue 12, 04:29</span>
  <span class="tray">
    <svg width="20" height="20" viewBox="0 0 20 20"><circle cx="10" cy="10" r="10" fill="#e30613"/><path d="M5.500 13.500v-7l4.500 4.500 4.500-4.500v7" fill="none" stroke="#fff" stroke-width="2"/></svg>
    <svg width="20" height="20" viewBox="0 0 20 20"><g fill="#111" stroke="#5a5a5a" stroke-width="1.800"><rect x="8.500" y="1" width="10" height="8"/><path d="M10 11.500h7"/><rect x="1" y="9" width="10" height="8"/><path d="M2.500 19.200h8"/></g></svg>
    <svg width="20" height="20" viewBox="0 0 20 20"><g stroke="#fff" stroke-width="3.200" stroke-linecap="round"><path d="M7.500 3v5M12.500 2.500v5M2.500 7.500h5M12.500 7.500H17M2.500 12.500h5M7.500 12.500v5"/></g><circle cx="14" cy="14" r="5.500" fill="#00cfff"/></svg>
    <svg width="10" height="16" viewBox="0 0 10 16"><path d="M1 4.500l7 7-3.500 3.500V1L8 4.500l-7 7" fill="none" stroke="#555" stroke-width="1.300"/></svg>
  </span>
</footer>
</body>
</html>
```
FILE: styles.css
```css
* { box-sizing: border-box; }
body { margin: 0; width: 1920px; height: 1080px; overflow: hidden; background: #222; display: flex; flex-direction: column; font-family: "Noto Sans", sans-serif; }
.defs { position: absolute; }
figure, h1, p { margin: 0; }
svg { display: block; flex: none; }

/* window manager titles */
.title { height: 24px; line-height: 23px; padding-left: 2px; background: #222; color: #888; border: solid #333; border-width: 1px 0; font-family: "DejaVu Sans Mono", monospace; font-size: 16.61px; white-space: pre; overflow: hidden; }
.title-focus { background: #5f676a; color: #fff; }
.title-indent { padding-left: 12px; }
.title-stack { width: 480px; padding-left: 16px; border-left: 1px solid #333; }
.title-active { flex: 1; padding-left: 16px; background: #285577; color: #fff; border: 1px solid #4c7899; }
.stack { display: flex; }
.desk { display: flex; height: 982px; }
.pane { width: 960px; display: flex; flex-direction: column; }

/* browser chrome */
.firefox { flex: 1; margin: 0 2px 2px; display: flex; flex-direction: column; background: #ececec; overflow: hidden; }
.tabs { height: 33px; display: flex; align-items: center; padding-bottom: 1px; background: #e8e8e8; box-shadow: inset 0 -1px #9b9b9b; }
.tab { width: 225px; height: 33px; margin-bottom: -1px; display: flex; align-items: center; padding: 0 9px 1px 9px; background: #ececec; border-top: 2px solid #4a90d9; border-right: 1px solid #9b9b9b; }
.favicon path { fill: none; stroke-width: 2.300; }
.tab-text { width: 165px; margin: 0 5px 0 6px; overflow: hidden; white-space: nowrap; font-size: 16px; letter-spacing: -.6px; color: #333; -webkit-mask-image: linear-gradient(90deg, #000 80%, transparent); mask-image: linear-gradient(90deg, #000 80%, transparent); }
.ic { fill: none; stroke: #4a4a4a; }
.ic .f { fill: #4a4a4a; stroke: none; }
.ic .g6 { fill: #666; stroke: none; }
.ic .l { fill: #ccc; stroke: none; }
.ic.off { stroke: #b4b4b4; }
.plus { margin-left: 8px; }
.nav { height: 40px; display: flex; align-items: center; gap: 14px; padding-left: 3px; }
.back { width: 34px; height: 34px; display: grid; place-items: center; border: 1px solid #a5a5a5; border-radius: 50%; background: #fbfbfb; margin-right: -6px; }
.nav > .ic { margin-left: -1px; margin-right: 1px; }
.urlbar { width: 529px; height: 31px; margin-left: 37px; display: flex; align-items: center; padding: 0 7px; background: #fff; border: 1px solid #a3a3a3; border-radius: 4px; }
.urlsep { width: 1px; height: 22px; margin: 0 8px 0 7px; background: #a8a8a8; }
.url { width: 356px; margin-left: 9px; overflow: hidden; white-space: nowrap; font-size: 16px; letter-spacing: -.54px; color: #888; -webkit-mask-image: linear-gradient(90deg, #000 91%, transparent 101%); mask-image: linear-gradient(90deg, #000 91%, transparent 101%); }
.url b { font-weight: 400; color: #0c0c0d; }
.urlbar .dots { margin-left: 36px; }
.urlbar .dots ~ .ic { margin-left: 12px; }
.tools { display: flex; align-items: center; margin-left: 39px; gap: 16px; }
.layers { margin-left: -1px; }
.navsep { width: 1px; height: 34px; margin: 0 -2px 0 -6px; background: #cfcfcf; }
.marks { height: 25px; display: flex; align-items: center; padding: 0 13px 3px 12px; font-size: 16px; letter-spacing: -.25px; color: #333; border-bottom: 1px solid #9b9b9b; }
.marks span { display: flex; align-items: center; gap: 4px; white-space: nowrap; }
.marks .gl { stroke-width: 1.300; margin-right: 2px; margin-top: 1px; }
.marks .wide { margin-right: 3px; }
.marks .glass { margin-right: 1px; }
.marks span:nth-child(4) { letter-spacing: -.37px; }
.marks .more { margin-left: auto; }

/* page */
.view { height: 845px; display: flex; overflow: hidden; background: #fff; }
.results { width: 495px; padding: 0 0 0 20px; margin-top: -1px; display: flex; flex-direction: column; gap: 20px; background: linear-gradient(90deg, #fff 480px, #e8e8e8); }
.row { display: flex; gap: 20px; }
.shot { background: #f6f6f6; }
.selected { position: relative; z-index: 0; }
.selected::before { content: ""; position: absolute; z-index: -1; inset: -8px; background: #e8f0fe; border: 1px solid #4285f4; border-radius: 6px; }
.selected .shot { background: #999; }
figcaption { height: 42px; padding: 10px 0 0 4px; display: flex; flex-direction: column; font-family: Roboto, sans-serif; white-space: nowrap; }
figcaption b { font-weight: 500; font-size: 12px; line-height: 15px; letter-spacing: .17px; color: #3c4043; }
figcaption .tight { letter-spacing: .07px; }
figcaption .loose { letter-spacing: .28px; }
figcaption span { font-size: 11px; line-height: 15px; margin-top: 2px; letter-spacing: .13px; color: #70757a; }
.detail { width: 435px; padding: 24px 11px 0 24px; background: #141519; color: #e0e1e3; font-family: Roboto, sans-serif; }
.hero { position: relative; width: 400px; height: 300px; background: #fff; }
.close { position: absolute; left: 8px; top: 8px; }
hr { margin: 24px 0 16px; border: 0; height: 1px; background: #424346; }
.actions { display: flex; gap: 8px; }
.chip { width: 99px; height: 36px; margin-right: auto; padding-left: 8px; display: flex; align-items: center; gap: 5px; border-radius: 18px; background: #303134; font: 12px "Liberation Sans", sans-serif; letter-spacing: .07px; color: #e8eaed; }
.btn { width: 36px; height: 36px; display: grid; place-items: center; border-radius: 50%; background: #303134; }
.share { margin-right: 2px; }
h1 { margin-top: 11px; font: 400 20px/30px "Liberation Sans", sans-serif; letter-spacing: -.03px; width: 380px; }
.rights { margin-top: 18px; font: 12px/16px "Liberation Sans", sans-serif; letter-spacing: .05px; color: #bdc1c6; }
.rights span { color: #85888d; }
.related-head { margin-top: 20px; display: flex; justify-content: space-between; font-size: 14px; line-height: 20px; letter-spacing: -.12px; }
.related-head a { color: #7ba4ee; letter-spacing: -.2px; }
.related { display: flex; gap: 20px; margin-top: 18px; }
.col { display: flex; flex-direction: column; gap: 16px; }
.detail figcaption b { color: #dcdee1; }
.detail figcaption span { color: #8b8e93; }
.vbar { background: #e6e6e6; border-left: 1px solid #b0b0b0; overflow: hidden; }
.vbar i { display: block; border-radius: 7px; background: #c6c7c9; }
.inner { width: 13px; }
.inner i { height: 364px; border-radius: 0 0 7px 7px; }
.outer { width: 13px; }
.outer i { height: 54px; margin-top: 14px; }
.hbar { height: 13px; background: #e6e6e6; border-top: 1px solid #a8a8a8; }
.hbar i { display: block; width: 845px; height: 12px; border-radius: 6px; background: #c6c7c9; }

/* floor plan strokes */
.w, .w5, .w8, .m, .t, .t5, .d5, .dw, .win, .win5, .pt, .pw, .cut { fill: none; stroke: #111; }
.w { stroke-width: 7; } .w5 { stroke-width: 4.200; } .w8 { stroke-width: 7; } .m { stroke-width: 5; }
.t { stroke-width: 1.800; stroke: #555; }
.t5 { stroke-width: 1.500; stroke: #8a8a8a; }
.d5 { stroke-width: 2; stroke: #666; stroke-dasharray: 7 4; }
.dw { stroke-width: 3; stroke: #555; stroke-dasharray: 9 2; }
.win { stroke-width: 7; stroke: #999; }
.win5 { stroke-width: 5; stroke: #999; }
.c, .c5 { fill: #fff; fill-opacity: .3; stroke: #555; stroke-width: 1.800; }
.k { fill: #000; }
.pf { fill: #e0e1e1; stroke: #aaa; stroke-width: 2; }
.pt { stroke: #bbb; stroke-width: 1.500; }
.pin .w5 { stroke-width: 2.600; stroke-dasharray: 22 5; }
.pw { stroke-width: 5; }
.cut { stroke: #f6f6f6; stroke-width: 6; }
.blue { fill: #8cc4f4; }
.lbl, .kl, .ks, .al, .dl, .ds, .ml, .ms, .vl, .pl { font-family: "Liberation Sans", sans-serif; text-anchor: middle; fill: #222; }
.lbl { font-size: 29px; } .b { font-weight: 700; fill: #000; }
.kl { font-family: Lato, sans-serif; font-size: 21px; fill: #000; } .ks { font-size: 9px; fill: #666; }
.al { font-size: 19px; }
.dl { font-size: 34px; font-weight: 700; fill: #000; } .ds { font-size: 15px; }
.ml { font-size: 15px; font-weight: 700; } .ms { font-size: 9px; font-weight: 700; }
.vl { font-size: 12px; } .pl { font-size: 23px; font-weight: 700; }

/* tk window */
.tk { flex: 1; background: #d9d9d9; border: solid #285577; border-width: 0 2px 2px; }
.menu { height: 30px; display: flex; align-items: center; gap: 13px; padding: 0 8px 3px 8px; border-top: 1px solid #fff; border-bottom: 1px solid #fff; box-shadow: inset 0 -2px #888, inset -1px 0 #888; font: 12px "DejaVu Sans", sans-serif; color: #000; white-space: nowrap; letter-spacing: -.03px; }
.canvas { position: relative; width: 900px; height: 900px; margin-left: 28px; background: #000; overflow: hidden; }
.cells { display: grid; grid-template: repeat(10, 90px) / repeat(10, 90px); margin: -1px 0 0 -1px; }
.cells i { width: 91px; height: 91px; padding: 0 2px 2px 0; display: grid; place-items: center; font: 12px "DejaVu Sans", sans-serif; color: #000; }
.cells .h { background: #fff; border: 1px solid #000; }
.cells .u { background: #00f; position: relative; z-index: 2; }
.cells .g { background: #0f0; position: relative; z-index: 3; }
.cells .r { background: #f00; position: relative; z-index: 3; }
.popup { position: absolute; z-index: 4; left: 131px; top: 313px; width: 661px; height: 276px; background: #d9d9d9; }

/* status bar */
.status { height: 26px; display: grid; grid-template-columns: 22px 33px 79px 372px 299px 141px 70px 279px 179px 179px 171px 96px; align-items: center; background: #000; color: #fff; font-family: "DejaVu Sans Mono", monospace; font-size: 16.61px; white-space: pre; }
.ws { width: 20px; height: 24px; line-height: 22px; text-align: center; background: #285577; border: 1px solid #4c7899; }
.blk { height: 20px; display: flex; align-items: center; padding-left: 4px; border-left: 1px solid #666; }
.blk em { font-style: normal; }
.clip { width: 30px; padding: 0; border: 0; overflow: hidden; justify-content: flex-end; }
.yel { color: #ff0; font-size: 15.500px; padding: 0 0 3px 6px; } .yel em { margin-left: -1px; }
.grn { color: #0f0; }
.grn em { margin-left: 4px; }
.blk .eth { margin-left: 11px; }
.blk .pw0 { margin-left: 3px; }
.blk .ld { margin-left: 4px; }
.blk .dt { margin-left: 3px; }
.zone { padding-left: 5px; }
.tray { display: flex; align-items: center; gap: 5px; padding-left: 0; }
```
